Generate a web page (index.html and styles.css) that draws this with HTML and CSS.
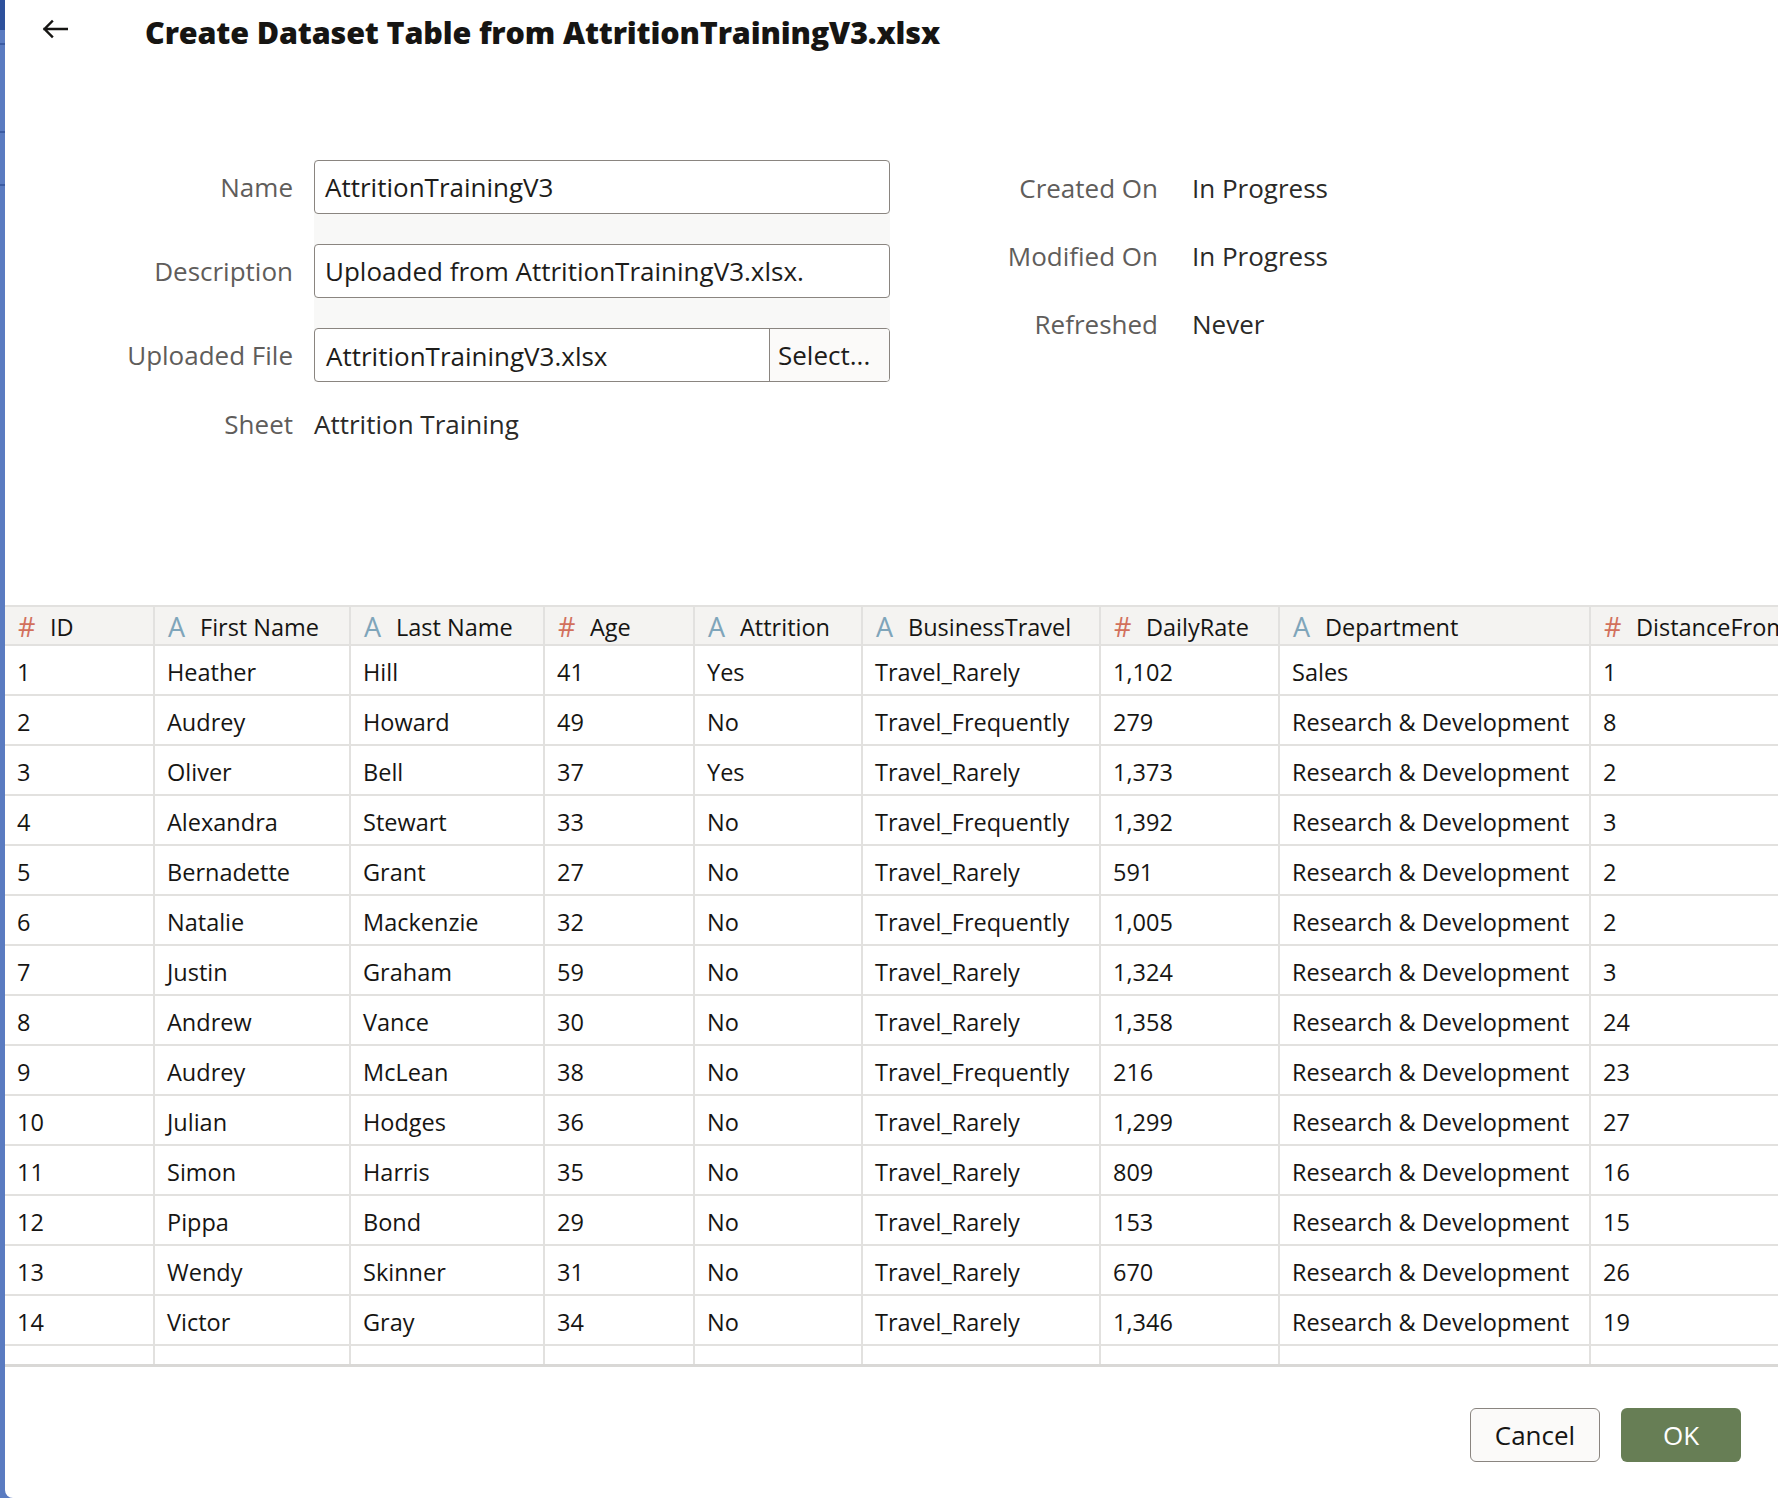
FILE: index.html
```html
<!DOCTYPE html>
<html lang="en">
<head>
<meta charset="utf-8">
<title>Create Dataset Table</title>
<link rel="stylesheet" href="styles.css">
</head>
<body>
<div class="app">
  <div class="strip">
    <div class="strip-top"></div>
    <div class="strip-seg s1"></div>
    <div class="strip-line"></div>
    <div class="strip-seg s2"></div>
    <div class="strip-line"></div>
    <div class="strip-seg s3"></div>
    <div class="strip-line"></div>
  </div>
  <div class="dialog">
    <div class="dlg-header">
      <button class="back" aria-label="Back">
        <svg width="27" height="20" viewBox="0 0 27 20"><path d="M26 10H3.5M11 2.5L3.5 10L11 17.5" fill="none" stroke="#161513" stroke-width="2.4" stroke-linecap="square"/></svg>
      </button>
      <h1 class="title">Create Dataset Table from AttritionTrainingV3.xlsx</h1>
    </div>

    <div class="form">
      <div class="form-left">
        <div class="fields">
          <div class="band"></div>
          <label class="lbl r1">Name</label>
          <div class="input r1">AttritionTrainingV3</div>
          <label class="lbl r2">Description</label>
          <div class="input r2">Uploaded from AttritionTrainingV3.xlsx.</div>
          <label class="lbl r3">Uploaded File</label>
          <div class="input file r3"><span class="file-name">AttritionTrainingV3.xlsx</span><span class="select">Select...</span></div>
        </div>
        <div class="sheet-row">
          <span class="lbl">Sheet</span>
          <span class="sheet-val">Attrition Training</span>
        </div>
      </div>
      <div class="form-right">
        <span class="rlbl">Created On</span><span class="rval">In Progress</span>
        <span class="rlbl">Modified On</span><span class="rval">In Progress</span>
        <span class="rlbl">Refreshed</span><span class="rval">Never</span>
      </div>
    </div>

    <div class="table-wrap">
      <div class="trow thead">
        <div class="cell"><span class="ic num">#</span>ID</div>
        <div class="cell"><span class="ic txt">A</span>First Name</div>
        <div class="cell"><span class="ic txt">A</span>Last Name</div>
        <div class="cell"><span class="ic num">#</span>Age</div>
        <div class="cell"><span class="ic txt">A</span>Attrition</div>
        <div class="cell"><span class="ic txt">A</span>BusinessTravel</div>
        <div class="cell"><span class="ic num">#</span>DailyRate</div>
        <div class="cell"><span class="ic txt">A</span>Department</div>
        <div class="cell last"><span class="ic num">#</span>DistanceFromHome</div>
      </div>
      <div class="trow"><div class="cell">1</div><div class="cell">Heather</div><div class="cell">Hill</div><div class="cell">41</div><div class="cell">Yes</div><div class="cell">Travel_Rarely</div><div class="cell">1,102</div><div class="cell">Sales</div><div class="cell">1</div></div>
      <div class="trow"><div class="cell">2</div><div class="cell">Audrey</div><div class="cell">Howard</div><div class="cell">49</div><div class="cell">No</div><div class="cell">Travel_Frequently</div><div class="cell">279</div><div class="cell">Research &amp; Development</div><div class="cell">8</div></div>
      <div class="trow"><div class="cell">3</div><div class="cell">Oliver</div><div class="cell">Bell</div><div class="cell">37</div><div class="cell">Yes</div><div class="cell">Travel_Rarely</div><div class="cell">1,373</div><div class="cell">Research &amp; Development</div><div class="cell">2</div></div>
      <div class="trow"><div class="cell">4</div><div class="cell">Alexandra</div><div class="cell">Stewart</div><div class="cell">33</div><div class="cell">No</div><div class="cell">Travel_Frequently</div><div class="cell">1,392</div><div class="cell">Research &amp; Development</div><div class="cell">3</div></div>
      <div class="trow"><div class="cell">5</div><div class="cell">Bernadette</div><div class="cell">Grant</div><div class="cell">27</div><div class="cell">No</div><div class="cell">Travel_Rarely</div><div class="cell">591</div><div class="cell">Research &amp; Development</div><div class="cell">2</div></div>
      <div class="trow"><div class="cell">6</div><div class="cell">Natalie</div><div class="cell">Mackenzie</div><div class="cell">32</div><div class="cell">No</div><div class="cell">Travel_Frequently</div><div class="cell">1,005</div><div class="cell">Research &amp; Development</div><div class="cell">2</div></div>
      <div class="trow"><div class="cell">7</div><div class="cell">Justin</div><div class="cell">Graham</div><div class="cell">59</div><div class="cell">No</div><div class="cell">Travel_Rarely</div><div class="cell">1,324</div><div class="cell">Research &amp; Development</div><div class="cell">3</div></div>
      <div class="trow"><div class="cell">8</div><div class="cell">Andrew</div><div class="cell">Vance</div><div class="cell">30</div><div class="cell">No</div><div class="cell">Travel_Rarely</div><div class="cell">1,358</div><div class="cell">Research &amp; Development</div><div class="cell">24</div></div>
      <div class="trow"><div class="cell">9</div><div class="cell">Audrey</div><div class="cell">McLean</div><div class="cell">38</div><div class="cell">No</div><div class="cell">Travel_Frequently</div><div class="cell">216</div><div class="cell">Research &amp; Development</div><div class="cell">23</div></div>
      <div class="trow"><div class="cell">10</div><div class="cell">Julian</div><div class="cell">Hodges</div><div class="cell">36</div><div class="cell">No</div><div class="cell">Travel_Rarely</div><div class="cell">1,299</div><div class="cell">Research &amp; Development</div><div class="cell">27</div></div>
      <div class="trow"><div class="cell">11</div><div class="cell">Simon</div><div class="cell">Harris</div><div class="cell">35</div><div class="cell">No</div><div class="cell">Travel_Rarely</div><div class="cell">809</div><div class="cell">Research &amp; Development</div><div class="cell">16</div></div>
      <div class="trow"><div class="cell">12</div><div class="cell">Pippa</div><div class="cell">Bond</div><div class="cell">29</div><div class="cell">No</div><div class="cell">Travel_Rarely</div><div class="cell">153</div><div class="cell">Research &amp; Development</div><div class="cell">15</div></div>
      <div class="trow"><div class="cell">13</div><div class="cell">Wendy</div><div class="cell">Skinner</div><div class="cell">31</div><div class="cell">No</div><div class="cell">Travel_Rarely</div><div class="cell">670</div><div class="cell">Research &amp; Development</div><div class="cell">26</div></div>
      <div class="trow"><div class="cell">14</div><div class="cell">Victor</div><div class="cell">Gray</div><div class="cell">34</div><div class="cell">No</div><div class="cell">Travel_Rarely</div><div class="cell">1,346</div><div class="cell">Research &amp; Development</div><div class="cell">19</div></div>
      <div class="trow"><div class="cell"></div><div class="cell"></div><div class="cell"></div><div class="cell"></div><div class="cell"></div><div class="cell"></div><div class="cell"></div><div class="cell"></div><div class="cell"></div></div>
    </div>

    <div class="footer">
      <button class="btn cancel">Cancel</button>
      <button class="btn ok">OK</button>
    </div>
  </div>
</div>
</body>
</html>
```

FILE: styles.css
```css
* { box-sizing: border-box; }
html, body {
  margin: 0;
  padding: 0;
  width: 1778px;
  height: 1498px;
  overflow: hidden;
  background: #5a7bc1;
  font-family: "Open Sans", "Noto Sans", sans-serif;
  color: #161513;
}
.app {
  display: flex;
  width: 1778px;
  height: 1498px;
  background: #5a7bc1;
}
.strip {
  width: 5px;
  flex: none;
  display: flex;
  flex-direction: column;
}
.strip-top { height: 30px; background: #2e519c; }
.strip-seg.s1 { height: 13px; }
.strip-seg.s2 { height: 86px; }
.strip-seg.s3 { height: 51px; }
.strip-line { height: 2px; background: #3c5ca3; }

.dialog {
  flex: 1;
  background: #ffffff;
  border-bottom-left-radius: 8px;
  display: flex;
  flex-direction: column;
  overflow: hidden;
  min-width: 0;
}

/* header */
.dlg-header {
  height: 64px;
  display: flex;
  align-items: center;
}
.back {
  margin-left: 36px;
  width: 28px;
  height: 24px;
  padding: 0;
  border: none;
  background: none;
  display: flex;
  align-items: center;
  margin-top: -6px;
}
.title {
  margin: 0 0 0 76px;
  font-size: 30.5px;
  font-weight: 800;
  letter-spacing: -0.15px;
  color: #161513;
  line-height: 40px;
}

/* form */
.form {
  margin-top: 96px;
  display: flex;
  align-items: flex-start;
}
.form-left { width: 885px; }
.fields {
  display: grid;
  grid-template-columns: 288px 576px;
  grid-template-rows: 54px 54px 54px;
  column-gap: 21px;
  row-gap: 30px;
}
.band {
  grid-column: 2;
  grid-row: 1 / 4;
  background: #f8f8f7;
}
.r1 { grid-row: 1; }
.r2 { grid-row: 2; }
.r3 { grid-row: 3; }
.lbl {
  grid-column: 1;
  text-align: right;
  font-size: 26px;
  color: #5f5d5b;
  display: flex;
  align-items: center;
  justify-content: flex-end;
}
.input {
  grid-column: 2;
  border: 1.5px solid #8a8580;
  border-radius: 4px;
  background: #ffffff;
  font-size: 26px;
  color: #1d1c1a;
  padding: 0 10px;
  display: flex;
  align-items: center;
}
.input.file { padding: 0; }
.file-name { flex: 1; padding-left: 11px; padding-top: 2px; }
.select {
  width: 120px;
  height: 100%;
  border-left: 1.5px solid #8a8580;
  background: #fbfaf9;
  padding-left: 8px;
  display: flex;
  align-items: center;
  border-radius: 0 3px 3px 0;
}
.sheet-row {
  margin-top: 22px;
  height: 40px;
  display: grid;
  grid-template-columns: 288px auto;
  column-gap: 21px;
  align-items: center;
}
.sheet-val { font-size: 26px; color: #2b2a28; }

.form-right {
  margin-left: 68px;
  padding-top: 8px;
  display: grid;
  grid-template-columns: 200px auto;
  grid-auto-rows: 40px;
  row-gap: 28px;
  column-gap: 34px;
  align-items: center;
}
.rlbl { text-align: right; font-size: 26px; color: #5f5d5b; }
.rval { font-size: 26px; color: #2b2a28; }

/* table */
.table-wrap {
  margin-top: 161px;
  height: 762px;
  overflow: hidden;
  border-bottom: 3px solid #d9d8d6;
  width: 1773px;
}
.trow {
  display: grid;
  grid-template-columns: 148px 196px 194px 150px 168px 238px 179px 311px 261px;
  height: 50px;
  width: 1845px;
}
.cell {
  border-left: 2px solid #e2e1df;
  border-bottom: 2px solid #e2e1df;
  padding-left: 12px;
  padding-top: 3px;
  font-size: 23.5px;
  color: #161513;
  display: flex;
  align-items: center;
  white-space: nowrap;
  overflow: hidden;
}
.cell:first-child { border-left: none; }
.thead {
  height: 41px;
  background: #f4f3f1;
  border-top: 2px solid #e2e1df;
}
.thead .cell { font-size: 23.5px; padding-top: 2px; }
.ic {
  display: inline-block;
  width: 33px;
  flex: none;
  font-size: 27px;
  line-height: 1;
  padding-left: 1px;
}
.ic.num { color: #d2705c; }
.ic.txt { color: #7fa5ba; }

/* footer */
.footer {
  margin-top: 41px;
  display: flex;
  justify-content: flex-end;
  gap: 21px;
  padding-right: 37px;
}
.btn {
  height: 54px;
  font-family: "Open Sans", "Noto Sans", sans-serif;
  font-size: 26px;
  border-radius: 6px;
  padding: 0;
}
.cancel {
  width: 130px;
  background: #fbfaf9;
  border: 1.5px solid #8a8580;
  color: #161513;
}
.ok {
  width: 120px;
  background: #677e55;
  border: none;
  color: #ffffff;
}
```
